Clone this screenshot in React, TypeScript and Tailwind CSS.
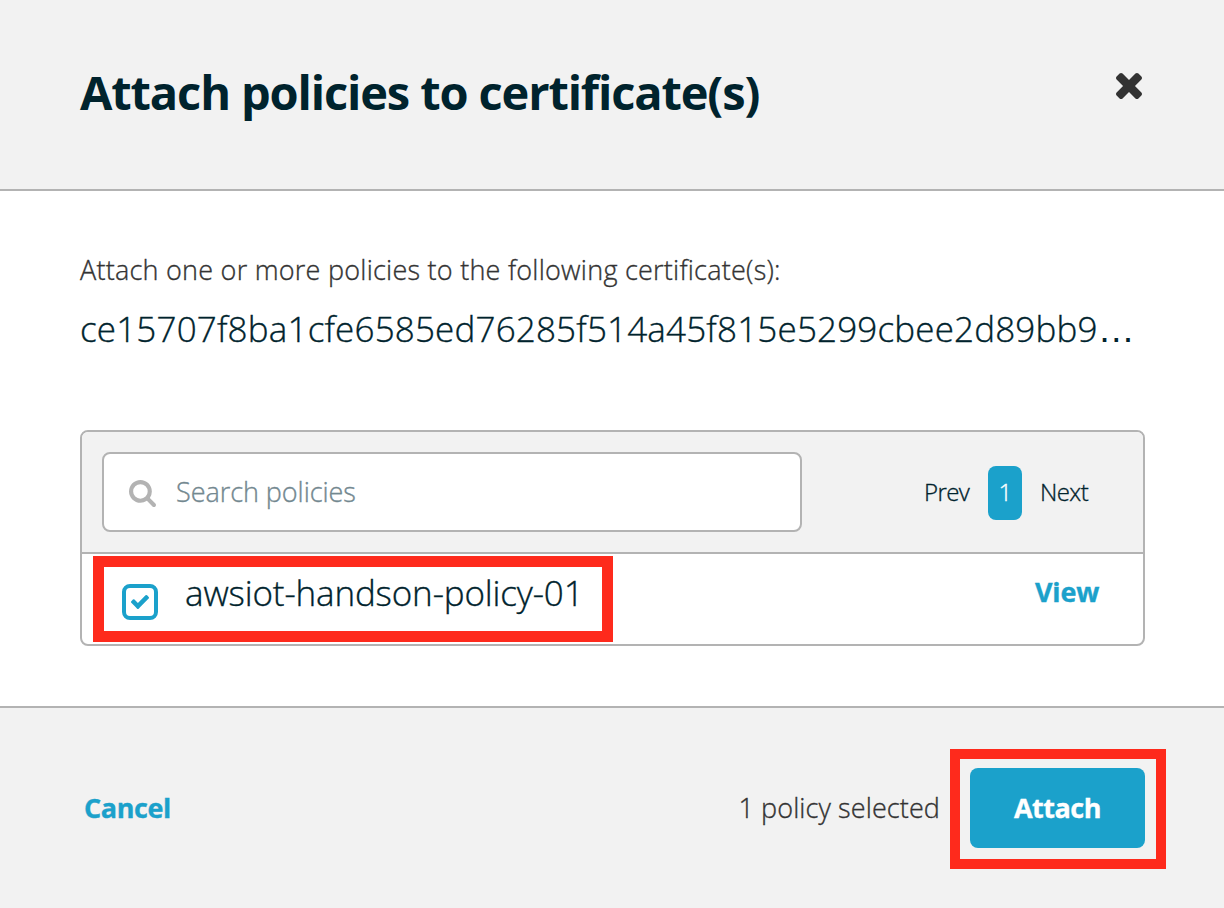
import type { ReactNode } from "react";

function Icon({ box, className, d }: { box: string; className: string; d: string }) {
  return (
    <svg viewBox={box} className={className} fill="currentColor" preserveAspectRatio="none" aria-hidden="true">
      <path d={d} />
    </svg>
  );
}

const CLOSE =
  "M1490 1322q0 40-28 68l-136 136q-28 28-68 28t-68-28l-294-294-294 294q-28 28-68 28t-68-28l-136-136q-28-28-28-68t28-68l294-294-294-294q-28-28-28-68t28-68l136-136q28-28 68-28t68 28l294 294 294-294q28-28 68-28t68 28l136 136q28 28 28 68t-28 68l-294 294 294 294q28 28 28 68z";
const SEARCH =
  "M1216 832q0-185-131.500-316.500t-316.500-131.500-316.500 131.500-131.500 316.500 131.500 316.500 316.500 131.500 316.500-131.500 131.500-316.500zm512 832q0 52-38 90t-90 38q-54 0-90-38l-343-342q-179 124-399 124-143 0-273.500-55.500t-225-150-150-225-55.500-273.500 55.500-273.500 150-225 225-150 273.500-55.500 273.500 55.500 225 150 150 225 55.500 273.500q0 220-124 399l343 343q37 37 37 90z";
const CHECK =
  "M1671 566q0 40-28 68l-724 724-136 136q-28 28-68 28t-68-28l-136-136-362-362q-28-28-28-68t28-68l136-136q28-28 68-28t68 28l294 295 656-657q28-28 68-28t68 28l136 136q28 28 28 68z";

function Text({ className, children }: { className: string; children: ReactNode }) {
  return <span className={`block whitespace-nowrap ${className}`}>{children}</span>;
}

export default function App() {
  return (
    <div className="flex h-[908px] w-[1224px] flex-col overflow-hidden bg-white font-['Open_Sans','Noto_Sans',sans-serif] font-light text-[#333333] [-webkit-text-stroke:0.35px]">
      <header className="flex h-[191px] shrink-0 items-start justify-between border-b-2 border-[#b3b3b3] bg-[#f2f2f2] pr-[82px] pl-20">
        <h1 className="pt-[60px] text-[47px] leading-[64px] font-bold tracking-[-1.13px] whitespace-nowrap text-[#00232d] [-webkit-text-stroke:0px]">
          Attach policies to certificate(s)
        </h1>
        <button aria-label="Close" className="mt-[73px]">
          <Icon box="302 366 1188 1188" className="size-[26px]" d={CLOSE} />
        </button>
      </header>

      <main className="flex h-[515px] shrink-0 flex-col px-20 pr-[79px]">
        <Text className="mt-[59px] text-[27px] leading-10 tracking-[0.24px]">
          Attach one or more policies to the following certificate(s):
        </Text>
        <Text className="mt-[15px] h-12 text-[35px] leading-[48px] tracking-[0.17px] text-[#00232d]">
          ce15707f8ba1cfe6585ed76285f514a45f815e5299cbee2d89bb9
          <span className="font-['Liberation_Sans',sans-serif] text-[37px] leading-none [-webkit-text-stroke:0px]">…</span>
        </Text>

        <section className="mt-[77px] h-[216px] overflow-hidden rounded-lg border-2 border-[#b3b3b3]">
          <div className="flex h-[122px] items-center border-b-2 border-[#b3b3b3] bg-[#f2f2f2] pl-5">
            <div className="flex h-20 w-[700px] shrink-0 items-center rounded-lg border-2 border-[#b3b3b3] bg-white pl-[25px]">
              <Icon box="64 128 1664 1664" className="mt-[3px] size-[27px] text-[#b3b3b3]" d={SEARCH} />
              <Text className="ml-5 text-[27px] leading-10 tracking-[-0.05px] text-[#738890]">Search policies</Text>
            </div>
            <nav className="ml-[122px] flex items-center pt-[2px] text-2xl tracking-[-0.6px] text-[#00232d]">
              <Text className="-mt-[2px] w-16">Prev</Text>
              <span className="flex h-[54px] w-[34px] items-center justify-center rounded-lg bg-[#1ba1cb] pb-[2px] text-white">1</span>
              <Text className="-mt-[2px] ml-[18px]">Next</Text>
            </nav>
          </div>
          <div className="flex h-[90px] items-start">
            <div className="mt-[2px] ml-[11px] flex h-[86px] w-[520px] shrink-0 items-start border-[11px] border-[#fe2a1c]">
              <span className="mt-[17px] ml-[18px] flex size-9 items-center justify-center rounded-lg border-4 border-[#1ba1cb] text-[#1ba1cb]">
                <Icon box="121 334 1550 1188" className="h-[14px] w-[18px]" d={CHECK} />
              </span>
              <Text className="mt-[2px] ml-[27px] text-[35px] leading-[48px] tracking-[-0.15px] text-[#00232d]">awsiot-handson-policy-01</Text>
            </div>
            <Text className="mt-[18px] ml-[422px] text-[27px] leading-10 font-bold tracking-[-0.2px] text-[#1ba1cb]">View</Text>
          </div>
        </section>
      </main>

      <footer className="flex h-[202px] shrink-0 items-start border-t-2 border-[#b3b3b3] bg-[#f2f2f2] pr-[58px] pl-[84px]">
        <Text className="mt-20 text-[27px] leading-10 font-bold tracking-[-0.4px] text-[#1ba1cb]">Cancel</Text>
        <Text className="mt-20 mr-[10px] ml-auto text-[27px] leading-10 tracking-[0.1px]">1 policy selected</Text>
        <div className="mt-[41px] h-[120px] w-[216px] border-10 border-[#fe2a1c] pt-[9px] pl-[10px]">
          <button className="flex h-20 w-[175px] items-center justify-center rounded-lg bg-[#1ba1cb] text-[27px] font-bold tracking-[-0.5px] text-white">
            Attach
          </button>
        </div>
      </footer>
    </div>
  );
}
